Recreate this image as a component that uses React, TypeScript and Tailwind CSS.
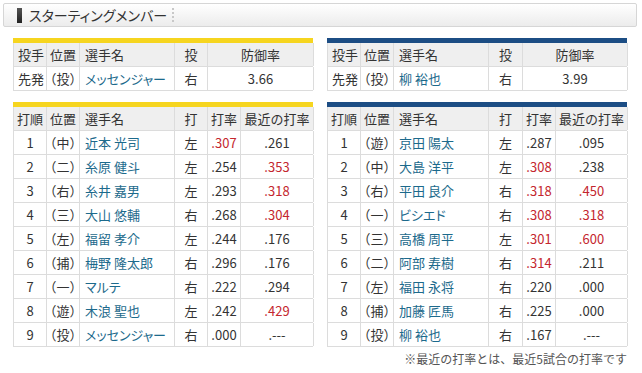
import React from "react"

const font = { fontFamily: '"Noto Sans CJK JP", "Noto Sans", sans-serif' }

const leftPitcher = [["先発", "（投）", "メッセンジャー", "右", "3.66"]]
const rightPitcher = [["先発", "（投）", "柳 裕也", "右", "3.99"]]

// [order, pos, name, bats, avg, recent]  "*" prefix = red
const leftBatters = [
  ["1", "（中）", "近本 光司", "左", "*.307", ".261"],
  ["2", "（二）", "糸原 健斗", "左", ".254", "*.353"],
  ["3", "（右）", "糸井 嘉男", "左", ".293", "*.318"],
  ["4", "（三）", "大山 悠輔", "右", ".268", "*.304"],
  ["5", "（左）", "福留 孝介", "左", ".244", ".176"],
  ["6", "（捕）", "梅野 隆太郎", "右", ".296", ".176"],
  ["7", "（一）", "マルテ", "右", ".222", ".294"],
  ["8", "（遊）", "木浪 聖也", "左", ".242", "*.429"],
  ["9", "（投）", "メッセンジャー", "右", ".000", ".---"],
]

const rightBatters = [
  ["1", "（遊）", "京田 陽太", "左", ".287", ".095"],
  ["2", "（中）", "大島 洋平", "左", "*.308", ".238"],
  ["3", "（右）", "平田 良介", "右", "*.318", "*.450"],
  ["4", "（一）", "ビシエド", "右", "*.308", "*.318"],
  ["5", "（三）", "高橋 周平", "左", "*.301", "*.600"],
  ["6", "（二）", "阿部 寿樹", "右", "*.314", ".211"],
  ["7", "（左）", "福田 永将", "右", ".220", ".000"],
  ["8", "（捕）", "加藤 匠馬", "右", ".225", ".000"],
  ["9", "（投）", "柳 裕也", "右", ".167", ".---"],
]

function StatTable({
  bar,
  widths,
  head,
  rows,
  nameCol,
  leftCols = [],
}: {
  bar: string
  widths: number[]
  head: string[]
  rows: string[][]
  nameCol: number
  leftCols?: number[]
}) {
  return (
    <div className="w-[300px]">
      <div className={`h-[5px] ${bar}`} />
      <div className="border-l border-[#dcdcdc]">
        <div className="flex h-[24px] bg-[#efefef] border-b border-[#dcdcdc] text-[13px] text-[#333]">
          {head.map((h, i) => (
            <div
              key={i}
              style={{ width: widths[i] }}
              className={`shrink-0 border-r border-[#dcdcdc] flex items-center ${
                i === nameCol ? "justify-start pl-[5px]" : leftCols.includes(i) ? "justify-start pl-[4px]" : "justify-center"
              }`}
            >
              {h}
            </div>
          ))}
        </div>
        {rows.map((r, ri) => (
          <div key={ri} className="flex h-[24px] bg-white border-b border-[#dcdcdc] text-[13px] text-[#333]">
            {r.map((c, i) => {
              const red = c.startsWith("*")
              const t = red ? c.slice(1) : c
              return (
                <div
                  key={i}
                  style={{ width: widths[i] }}
                  className={`shrink-0 border-r border-[#dcdcdc] flex items-center whitespace-nowrap ${
                    i === nameCol
                      ? "justify-start pl-[5px] text-[#1c6a8c] [font-feature-settings:'palt']"
                      : leftCols.includes(i)
                        ? "justify-start pl-[4px]"
                        : "justify-center"
                  } ${red ? "text-[#c4262e]" : ""}`}
                >
                  {t}
                </div>
              )
            })}
          </div>
        ))}
      </div>
    </div>
  )
}

export default function App() {
  return (
    <div className="w-[642px] h-[373px] bg-white pt-[3px]" style={font}>
      {/* Section header */}
      <div className="mx-[3px] w-[634px] h-[24px] border border-[#d6d6d6] rounded-[2px] bg-gradient-to-b from-white to-[#ececec] flex items-center">
        <div className="ml-[13px] w-[5px] h-[15px] bg-gradient-to-b from-[#555] to-[#222]" />
        <span className="ml-[7px] text-[14px] text-[#333] [font-feature-settings:'palt']">スターティングメンバー</span>
        <div className="ml-[5px] h-[14px] border-l-2 border-dotted border-[#c8c8c8]" />
      </div>

      {/* Pitchers */}
      <div className="flex gap-[14px] pl-[13px] mt-[11px]">
        <StatTable
          bar="bg-[#f6d51f]"
          widths={[33, 33, 95, 33, 106]}
          head={["投手", "位置", "選手名", "投", "防御率"]}
          rows={leftPitcher}
          nameCol={2}
          leftCols={[0]}
        />
        <StatTable
          bar="bg-[#1c4d84]"
          widths={[33, 33, 95, 34, 105]}
          head={["投手", "位置", "選手名", "投", "防御率"]}
          rows={rightPitcher}
          nameCol={2}
          leftCols={[0]}
        />
      </div>

      {/* Batters */}
      <div className="flex gap-[14px] pl-[13px] mt-[11px]">
        <StatTable
          bar="bg-[#f6d51f]"
          widths={[33, 33, 95, 33, 33, 73]}
          head={["打順", "位置", "選手名", "打", "打率", "最近の打率"]}
          rows={leftBatters}
          nameCol={2}
        />
        <StatTable
          bar="bg-[#1c4d84]"
          widths={[33, 33, 95, 34, 33, 72]}
          head={["打順", "位置", "選手名", "打", "打率", "最近の打率"]}
          rows={rightBatters}
          nameCol={2}
        />
      </div>

      <div className="w-[627px] text-right text-[12px] text-[#555] mt-[3px]">
        ※最近の打率とは、最近5試合の打率です
      </div>
    </div>
  )
}
